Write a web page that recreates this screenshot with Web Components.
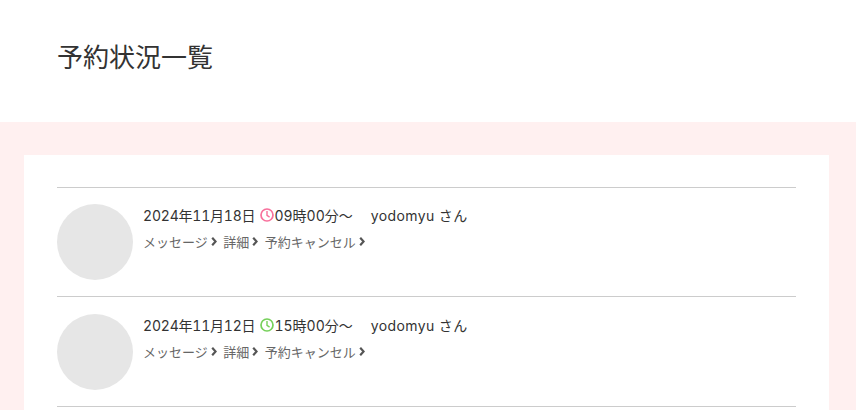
<!DOCTYPE html>
<html lang="ja">
<head>
<meta charset="utf-8">
<title>予約状況一覧</title>
<style>
  html, body { margin: 0; padding: 0; background: #fff; height: 410px; overflow: hidden; }
  body { font-family: Inter, "Noto Sans CJK JP", sans-serif; color: #333; }
</style>
</head>
<body>
<reserve-page>
  <span slot="title">予約状況一覧</span>
  <reserve-row date="2024年11月18日" time="09時00分〜" user="yodomyu さん" clock="#f8709c"></reserve-row>
  <reserve-row date="2024年11月12日" time="15時00分〜" user="yodomyu さん" clock="#76d05a"></reserve-row>
</reserve-page>

<script>
"use strict";

////////////////////////////////////////////
// Page frame: title band + pink area + white card
class ReservePage extends HTMLElement {
  constructor() {
    super();
    this.attachShadow({ mode: "open" }).innerHTML = `
      <style>
        :host { display: block; }
        header { height: 122px; padding-left: 57px; display: flex; align-items: center; box-sizing: border-box; padding-bottom: 7px; }
        h1 { margin: 0; font-size: 26px; font-weight: 400; line-height: 1.2; color: #333; }
        .back { background: #fff0f0; padding: 33px 27px 0 24px; height: 288px; box-sizing: border-box; }
        .card { background: #fff; padding: 32px 33px 0; height: 255px; box-sizing: border-box; }
        .list { border-top: 1px solid #ccc; }
      </style>
      <header><h1><slot name="title"></slot></h1></header>
      <div class="back"><div class="card"><div class="list"><slot></slot></div></div></div>
    `;
  }
}

////////////////////////////////////////////
// One reservation row
class ReserveRow extends HTMLElement {
  constructor() {
    super();
    const clock = this.getAttribute("clock");
    const link = (text) => `<a>${text}<svg width="6" height="9" viewBox="0 0 6 9"><path d="M1.2 .8 4.6 4.5 1.2 8.2" fill="none" stroke="#555" stroke-width="2.2"/></svg></a>`;
    this.attachShadow({ mode: "open" }).innerHTML = `
      <style>
        :host { display: block; height: 108px; border-bottom: 1px solid #ccc; }
        :host(:not(:first-of-type)) { padding-top: 1px; }
        .row { display: flex; gap: 10px; padding-top: 16px; }
        .avatar { width: 76px; height: 76px; border-radius: 50%; background: #e6e6e6; flex: none; }
        .body { font-size: 14px; font-variant-numeric: tabular-nums; }
        .info { display: flex; align-items: center; height: 21px; white-space: pre; }
        .info svg { margin-left: 5px; }
        .date { letter-spacing: -0.2px; }
        .user { margin-left: 18px; letter-spacing: 0.4px; }
        .links { display: flex; gap: 6.5px; margin-top: 6px; height: 21px; align-items: center; color: #666; font-size: 13px; }
        a { display: inline-flex; align-items: center; gap: 3px; }
      </style>
      <div class="row">
        <div class="avatar"></div>
        <div class="body">
          <div class="info">
            <span class="date">${this.getAttribute("date")}</span>
            <svg width="14" height="14" viewBox="0 0 14 14" fill="none" stroke="${clock}"><circle cx="7" cy="7" r="6" stroke-width="1.7"/><path d="M7 3v4.3l2.6 1.8" stroke-width="1.4"/></svg>
            <span>${this.getAttribute("time")}</span>
            <span class="user">${this.getAttribute("user")}</span>
          </div>
          <div class="links">${link("メッセージ")}${link("詳細")}${link("予約キャンセル")}</div>
        </div>
      </div>
    `;
  }
}

////////////////////////////////////////////
// Executed Code
window.customElements.define("reserve-page", ReservePage);
window.customElements.define("reserve-row", ReserveRow);
</script>
</body>
</html>
